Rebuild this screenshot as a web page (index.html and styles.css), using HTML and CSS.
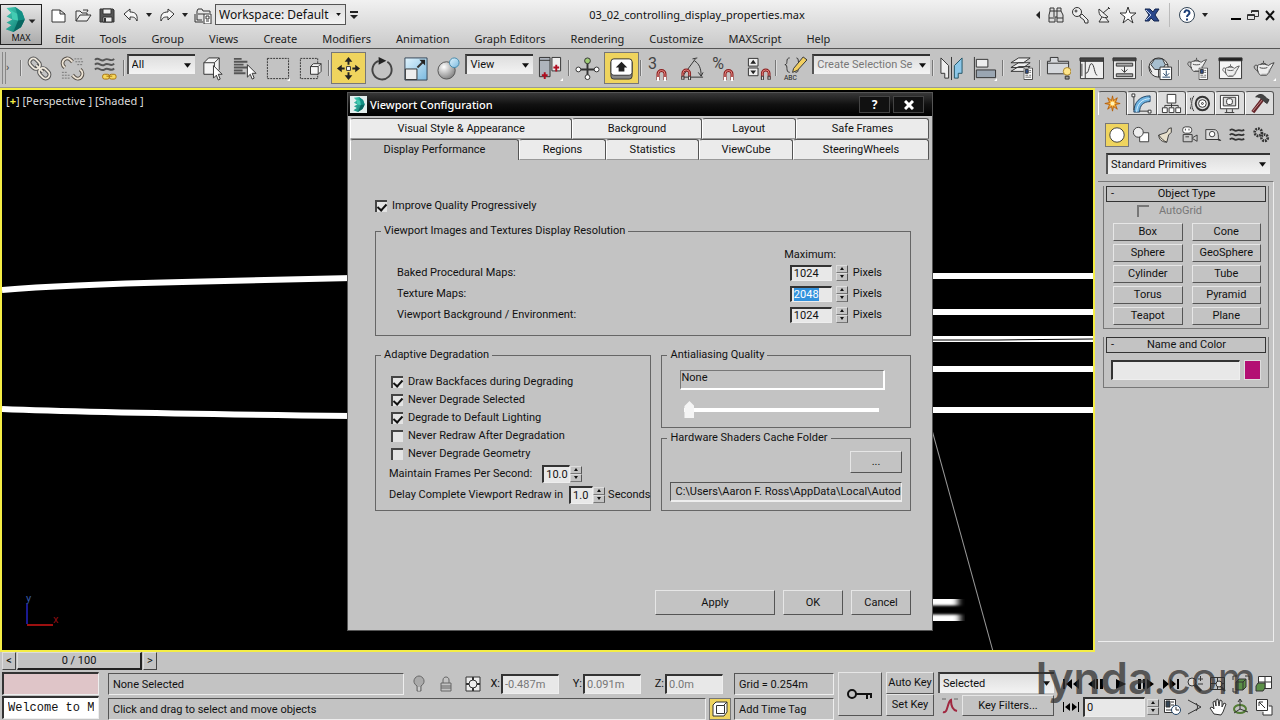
FILE: index.html
```html
<!DOCTYPE html>
<html lang="en">
<head>
  <meta charset="UTF-8">
  <meta name="viewport" content="width=device-width, initial-scale=1.0">
  <title>03_02_controlling_display_properties.max</title>
  <link rel="stylesheet" href="styles.css">
</head>
<body>

  <!-- Shared shapes -->
  <svg class="defs" aria-hidden="true">
    <defs>
      <linearGradient id="teal" x1="0" y1="0" x2="1" y2="1">
        <stop offset="0" stop-color="#45cdb5"/><stop offset="1" stop-color="#08736c"/>
      </linearGradient>
      <radialGradient id="ball" cx=".35" cy=".3" r=".8">
        <stop offset="0" stop-color="#fff"/><stop offset="1" stop-color="#777"/>
      </radialGradient>
      <linearGradient id="sky" x1="0" y1="0" x2="1" y2="1">
        <stop offset="0" stop-color="#e2f4fd"/><stop offset="1" stop-color="#7ab9e0"/>
      </linearGradient>
      <symbol id="logo" viewBox="0 0 20 26">
        <path d="M1 1 10 0 17 5 20 13 16 21 8 26 0 23 6 19 1 16 7 13 1 10 6 6Z" fill="url(#teal)"/>
        <path d="M10 0 17 5 20 13 13 14 12 7Z" fill="#128f84"/>
        <path d="M20 13 16 21 8 26 13 14Z" fill="#086660"/>
        <path d="M1 1 12 7 13 14 7 13 6 6Z" fill="#43cbb2"/>
      </symbol>
      <symbol id="magnet" viewBox="0 0 11 13">
        <path d="M2 12V6a3.500 3.500 0 0 1 7 0v6" fill="none" stroke="#8c2020" stroke-width="3"/>
        <path d="M2 12V6a3.500 3.500 0 0 1 7 0v6" fill="none" stroke="#e88a84"/>
        <path d="M1 9h2v4H1zM8 9h2v4H8z" fill="#fff"/>
      </symbol>
      <symbol id="teapot" viewBox="0 0 24 18">
        <path d="M6 7C7 5 15 5 17 7l3-2 3-1-4 7c-1 4-3 5-4 6H9C6 15 5 12 6 7Z" fill="#eee" stroke="#444"/>
        <path d="M6 7C1 5 1 11 7 13M9 6c1-2 5-2 6 0M12 2v2M8 9c2 1 6 1 8 0" fill="none" stroke="#444"/>
        <path d="M10 16h5c2-1 3-3 3-5" fill="none" stroke="#999"/>
      </symbol>
      <symbol id="card" viewBox="0 0 10 13">
        <path d="M.5.5h9v12h-9z" fill="#fff" stroke="#444"/>
        <path d="M2 2h3v4H2z" fill="#2c4d8d"/><path d="M6 3h2M6 5h2M2 8h3M6 8h2M2 10h6" stroke="#666"/>
      </symbol>
    </defs>
  </svg>

  <header class="app-header">
    <button class="app-button" type="button">
      <svg class="app-logo" viewBox="0 0 32 28"><use href="#logo" x="0" y="1" width="20" height="26"/><path d="M24 14h7l-3.500 4z" fill="#222"/></svg>
      <span>MAX</span>
    </button>
    <div class="header-rows">
      <div class="title-row">
        <div class="quick-bar">
          <button type="button" aria-label="New"><svg class="icon" viewBox="0 0 18 18"><path d="M2 4h8l5 4v8H2zM10 4v4h5" fill="#fff"/></svg></button>
          <button type="button" aria-label="Open"><svg class="icon" viewBox="0 0 18 18"><path d="M2 15V5h4l2 2h5v2M2 15 6 9h11l-4 6zM9 4h5l-1 2" fill="#eee"/></svg></button>
          <button type="button" aria-label="Save"><svg class="icon" viewBox="0 0 18 18"><path d="M2 3h13l1 1v12H2z" fill="#555"/><path d="M5 3h8v5H5zM5 11h9v5H5z" fill="#eee"/><path d="M7 12v4" stroke-width="2"/></svg></button>
          <button type="button" aria-label="Undo"><svg class="icon" viewBox="0 0 18 18"><path d="m2 8 6-5v3c5 0 8 2 7 9-2-4-3-4-7-4v3z" fill="#f6f6f6"/></svg></button>
          <span class="tiny-arrow"></span>
          <button type="button" aria-label="Redo"><svg class="icon" viewBox="0 0 18 18"><path d="m16 8-6-5v3c-5 0-8 2-7 9 2-4 3-4 7-4v3z" fill="#f6f6f6"/></svg></button>
          <span class="tiny-arrow"></span>
          <button type="button" aria-label="Project folder"><svg class="icon" viewBox="0 0 18 18"><path d="M8 14H3V5l1-2h4l1 2h7v2M1 8v8h8M4 8h6" /><path d="M10 8h7v10h-7z" fill="#fff"/><path d="M12 10h3v3h-3zM12 15h3"/></svg></button>
          <select class="workspace" aria-label="Workspace"><option>Workspace: Default</option></select>
          <svg class="quick-more" viewBox="0 0 8 8"><path d="M0 0h8v2H0zM0 4h8L4 8z" fill="#222"/></svg>
        </div>
        <h1 class="doc-title">03_02_controlling_display_properties.max</h1>
        <div class="info-bar">
          <svg class="back-arrow" viewBox="0 0 4 8"><path d="M4 0v8L0 4z" fill="#222"/></svg>
          <button type="button" aria-label="Search"><svg class="icon" viewBox="0 0 18 18"><path d="M3 2h4v3h3V2h4v3l2 4v7h-6v-5H8v5H2V9l1-4zM3 5h4v6M10 11V5h4M2 12h5M10 12h6" fill="#ddd"/></svg></button>
          <button type="button" aria-label="Subscription"><svg class="icon" viewBox="0 0 18 18"><circle cx="6" cy="6" r="4.500" fill="#eee"/><circle cx="5" cy="5" r="1"/><path d="m9 9 2-1 6 6v3h-3l-1-3-4-3z" fill="#eee"/></svg></button>
          <button type="button" aria-label="Communication"><svg class="icon" viewBox="0 0 18 18"><path d="M4 3c-1 7 4 10 9 8zM8 7l6-5M13 1l2 2M7 11l-3 5h10l-4-5" fill="#eee"/></svg></button>
          <button type="button" aria-label="Favorites"><svg class="icon" viewBox="0 0 18 18"><path d="m9 1 2 6h6l-5 4 2 6-5-4-5 4 2-6-5-4h6z" fill="#fff"/></svg></button>
          <button type="button" aria-label="Exchange"><svg class="icon" viewBox="0 0 18 18"><path d="M2 3h5l3 3 2-3h4l-4 6 4 6h-5l-3-3-2 3H2l4-6z" fill="#29478c" stroke="#14264f"/><path d="m3 4 5 5-5 5" stroke="#b8c8e8"/></svg></button>
          <span class="info-sep"></span>
          <button type="button" aria-label="Help"><svg class="icon" viewBox="0 0 18 18"><circle cx="9" cy="9" r="7.500" fill="#fff" stroke="#345"/><path d="M6.500 7c0-4 5-3 5 0 0 2-2.500 1-2.500 4M9 12.500v2" stroke="#1d3f78" stroke-width="2"/></svg></button>
          <span class="tiny-arrow"></span>
        </div>
        <div class="window-buttons">
          <button type="button" aria-label="Minimize"><svg viewBox="0 0 12 12"><path d="M1 9h10v2H1z"/></svg></button>
          <button type="button" aria-label="Restore"><svg class="icon" viewBox="0 0 12 12"><path d="M4.500 4V1.500h7v6H8M.5 5.500h7v5h-7zM.5 6.500h7M4.500 2.500h7"/></svg></button>
          <button type="button" aria-label="Close"><svg viewBox="0 0 12 12"><path d="m2 2 8 9M10 2l-8 9" stroke="#111" stroke-width="2"/></svg></button>
        </div>
      </div>
      <nav class="menu-bar">
        <a href="#">Edit</a>
        <a href="#">Tools</a>
        <a href="#">Group</a>
        <a href="#">Views</a>
        <a href="#">Create</a>
        <a href="#">Modifiers</a>
        <a href="#">Animation</a>
        <a href="#">Graph Editors</a>
        <a href="#">Rendering</a>
        <a href="#">Customize</a>
        <a href="#">MAXScript</a>
        <a href="#">Help</a>
      </nav>
    </div>
  </header>

  <div class="toolbar">
    <span class="grip"></span><span class="chevron">›</span>
    <span class="sep"></span>
    <button type="button" aria-label="Link"><svg class="icon" viewBox="0 0 26 26"><g transform="rotate(45 13 13)"><rect x="0" y="9" width="12" height="8" rx="4" stroke="#555" stroke-width="4"/><rect x="14" y="9" width="12" height="8" rx="4" stroke="#555" stroke-width="4"/><path d="M8 13h10" stroke="#555" stroke-width="4"/><rect x="0" y="9" width="12" height="8" rx="4" stroke="#eee8dc" stroke-width="2"/><rect x="14" y="9" width="12" height="8" rx="4" stroke="#eee8dc" stroke-width="2"/><path d="M8 13h10" stroke="#eee8dc" stroke-width="2"/></g></svg></button>
    <button type="button" aria-label="Unlink"><svg class="icon" viewBox="0 0 26 26"><g stroke="#554f48" stroke-width="4"><path d="M5 12C-1 7 6-1 11 4l2 2M21 14c6 5-1 13-6 8l-2-2"/></g><g stroke="#eee4d4" stroke-width="2"><path d="M5 12C-1 7 6-1 11 4l2 2M21 14c6 5-1 13-6 8l-2-2"/></g><path d="M15 3h9M16 6h8M18 9h6M2 17h6M2 20h8M2 23h9" stroke="#777" stroke-dasharray="2 1"/></svg></button>
    <button type="button" aria-label="Bind to space warp"><svg class="icon" viewBox="0 0 26 26"><path d="M2 4c4-4 6 3 10 0s6 3 10-1M2 9c4-4 6 3 10 0s6 3 10-1M2 14c4-4 6 3 10 0s6 3 10-1" stroke="#555" stroke-width="2"/><rect x="10" y="19" width="7" height="5" rx="2" fill="#f6d85c" stroke="#a87410"/><rect x="17" y="19" width="7" height="5" rx="2" fill="#f6d85c" stroke="#a87410"/><path d="M14 21h6" stroke="#a87410"/></svg></button>
    <span class="sep"></span>
    <select class="filter" aria-label="Selection filter"><option>All</option></select>
    <button type="button" aria-label="Select object"><svg class="icon" viewBox="0 0 26 26"><path d="m4 7 5-5h11v12l-5 5H4zM4 7h11v12M15 7l5-5" fill="#f4f4f4"/><path d="M14 10v13l3-3 2 5 2-1-2-5h4z" fill="#fff"/></svg></button>
    <button type="button" aria-label="Select by name"><svg class="icon" viewBox="0 0 26 26"><path d="M2 3h8M2 6h14M2 9h10M2 12h14M2 15h9M2 18h12" stroke="#555" stroke-width="2"/><path d="M16 9v13l3-3 2 5 2-1-2-5h4z" fill="#fff"/></svg></button>
    <button type="button" aria-label="Selection region"><svg class="icon" viewBox="0 0 26 26"><path d="M2.500 2.500h22v21h-22z" stroke-dasharray="2 1"/><path d="m23 26 3-3v3z" fill="#fff" stroke="none"/></svg></button>
    <button type="button" aria-label="Window crossing"><svg class="icon" viewBox="0 0 26 26"><path d="M2.500 2.500h18v21h-18z" stroke-dasharray="2 1"/><path d="m13 11 3-3h8v8l-3 3h-8zM13 11h8v8M21 11l3-3" fill="#f4f4f4"/></svg></button>
    <span class="sep"></span>
    <button class="on" type="button" aria-label="Move"><svg class="icon" viewBox="0 0 26 26"><path d="M11 11h4v4h-4z" fill="#fff"/><path d="M13 1 9 6h3v3h2V6h3zM13 25l-4-5h3v-3h2v3h3zM1 13l5-4v3h3v2H6v3zM25 13l-5-4v3h-3v2h3v3z" fill="#222" stroke="none"/></svg></button>
    <button type="button" aria-label="Rotate"><svg class="icon" viewBox="0 0 26 26"><path d="M9 5a10 10 0 1 0 9 1" stroke="#444" stroke-width="2"/><path d="m9 1 8 4-8 4z" fill="#222" stroke="none"/></svg></button>
    <button type="button" aria-label="Scale"><svg class="icon" viewBox="0 0 26 26"><path d="M2 2h23v23H2z" fill="url(#sky)" stroke="#345"/><path d="M2.500 13.500h12v11h-12z" fill="#eee"/><path d="m15 12 6-6" stroke-width="2"/><path d="M17 4h6v6z" fill="#222" stroke="none"/></svg></button>
    <button type="button" aria-label="Place"><svg class="icon" viewBox="0 0 26 26"><circle cx="11" cy="15" r="9" fill="url(#ball)" stroke="#555"/><circle cx="19" cy="7" r="5" fill="url(#sky)" stroke="#48a"/></svg></button>
    <select class="filter" aria-label="Reference coordinate system"><option>View</option></select>
    <button type="button" aria-label="Pivot center"><svg class="icon" viewBox="0 0 26 26"><path d="M1.500 1.500h11v20h-11zM1.500 4.500h11" fill="#aeb4bd"/><path d="M14.500 1.500h9v14h-9z" fill="#eee"/><path d="M7 17v7M4 20h6M19 9v7M16 12h6" stroke="#b00d20" stroke-width="2"/><path d="m23 26 3-3v3z" fill="#fff" stroke="none"/></svg></button>
    <span class="sep"></span>
    <button type="button" aria-label="Manipulate"><svg class="icon" viewBox="0 0 26 26"><path d="M13 5v17M3 14h20" stroke-width="2"/><circle cx="13" cy="5" r="3" fill="#9fcd74"/><circle cx="13" cy="22" r="2.500" fill="#fff"/><circle cx="3.500" cy="14" r="2.500" fill="#fff"/><circle cx="22.500" cy="14" r="2.500" fill="#fff"/></svg></button>
    <button class="on" type="button" aria-label="Keyboard override"><svg class="icon" viewBox="0 0 26 26"><rect x="2" y="4" width="22" height="20" rx="3" fill="#888"/><rect x="2" y="3" width="22" height="17" rx="3" fill="#fff"/><path d="m13 6 6 6h-3v4h-6v-4H7z" fill="#222" stroke="none"/></svg></button>
    <span class="sep"></span>
    <button type="button" aria-label="Snaps toggle"><span class="glyph">3</span><svg class="snap"><use href="#magnet"/></svg></button>
    <button type="button" aria-label="Angle snap"><svg class="icon" viewBox="0 0 26 26"><path d="M2 22 16 3M2 22h22M15 5c5 3 7 8 7 16M13 3l5-1M19 17l3 4 2-4"/><use href="#magnet" x="1" y="12" width="11" height="13"/></svg></button>
    <button type="button" aria-label="Percent snap"><span class="glyph">%</span><svg class="snap"><use href="#magnet"/></svg></button>
    <button type="button" aria-label="Spinner snap"><svg class="icon" viewBox="0 0 26 26"><path d="M2.500 2.500h10v8h-10zM2.500 12.500h10v8h-10z" fill="#eee"/><path d="m7.500 4 3 4h-6zM7.500 19l3-4h-6z" fill="#222" stroke="none"/><use href="#magnet" x="15" y="12" width="11" height="13"/></svg></button>
    <span class="sep"></span>
    <button type="button" aria-label="Edit named selection sets"><svg class="icon" viewBox="0 0 26 26"><path d="M8 2C3 2 7 9 3 9c4 0 0 8 5 8M15 2c3 0 1 4 3 6M14 17c4 0 2-3 3-5"/><path d="m12 13 10-12 4 3-10 11-5 2z" fill="#f2cf60"/><text x="2" y="25" class="abc">ABC</text></svg></button>
    <select class="filter sets" aria-label="Named selection sets"><option>Create Selection Se</option></select>
    <span class="sep"></span>
    <button type="button" aria-label="Mirror"><svg class="icon" viewBox="0 0 26 26"><path d="m2 2 8 8v13H6v-5H2z" fill="#eee"/><path d="m24 2-8 8v13h4v-5h4z" fill="#8cc7e8" stroke="#256"/><path d="M13 1v24"/></svg></button>
    <button type="button" aria-label="Align"><svg class="icon" viewBox="0 0 26 26"><path d="M2.500 1v24"/><path d="M4.500 3.500h12v8h-12z" fill="#eee"/><path d="M4.500 14.500h20v8h-20z" fill="#9aa6b2"/><path d="m23 26 3-3v3z" fill="#fff" stroke="none"/></svg></button>
    <span class="sep"></span>
    <button type="button" aria-label="Layers"><svg class="icon" viewBox="0 0 26 26"><path d="m2 16 8-5h12l-7 5zM2 12l8-5h12l-7 5zM2 7l8-5h12l-7 5z" fill="#eee"/><use href="#card" x="15" y="12" width="10" height="13"/></svg></button>
    <span class="sep"></span>
    <button type="button" aria-label="Ribbon"><svg class="icon" viewBox="0 0 26 26"><path d="M1.500 18.500v-13h3v-4h8v4h11v13zM1.500 7.500h22" fill="#d5d8dc"/><circle cx="22" cy="16" r="4" fill="#ffe68a" stroke="#a8842e"/><path d="M20 21h4v3h-4z" fill="#999"/></svg></button>
    <button type="button" aria-label="Curve editor"><svg class="icon" viewBox="0 0 26 26"><path d="M1.500 2.500h24v21h-24zM1.500 5.500h24M6.500 5v18" fill="#eee"/><path d="M1 2h25v3H1z" fill="#444"/><path d="M7 18c4 0 3-10 6-10s3 12 6 12M3 8v13" stroke-width="1"/></svg></button>
    <button type="button" aria-label="Schematic view"><svg class="icon" viewBox="0 0 26 26"><path d="M1.500 2.500h23v21h-23z" fill="#eee"/><path d="M1 2h24v3H1z" fill="#444"/><path d="M4.500 7.500h17v3h-17zM4.500 18.500h17v3h-17z" fill="#aaa"/><path d="M13 11v6M10 14l3 3 3-3"/></svg></button>
    <span class="sep"></span>
    <button type="button" aria-label="Material editor"><svg class="icon" viewBox="0 0 26 26"><circle cx="11" cy="12" r="10" fill="#eee"/><path d="M7 3h8l3 6-3 5H7l-4-5zM1 11l3 6M11 14v8M18 9h3" fill="#a7bfd0"/><path d="M12.500 11.500h12v13h-12z" fill="#fff"/><path d="M15 14h8M15 22h8M19 15v5M16 18l3 3 3-3" stroke="#246"/></svg></button>
    <span class="sep"></span>
    <button type="button" aria-label="Render setup"><svg class="icon" viewBox="0 0 26 26"><use href="#teapot" x="0" y="0" width="24" height="17"/><use href="#card" x="14" y="12" width="10" height="13"/></svg></button>
    <button type="button" aria-label="Rendered frame window"><svg class="icon" viewBox="0 0 26 26"><path d="M1.500 2.500h23v21h-23z" fill="#f5f5f5"/><path d="M1 2h24v3H1z" fill="#222"/><use href="#teapot" x="3" y="7" width="20" height="15"/></svg></button>
    <button type="button" aria-label="Render"><svg class="icon" viewBox="0 0 26 26"><use href="#teapot" x="1" y="3" width="24" height="18"/><path d="m23 26 3-3v3z" fill="#fff" stroke="none"/></svg></button>
  </div>

  <main class="workspace-area">
    <section class="viewport">
      <!-- Wireframe lines of the scene -->
      <svg class="scene" viewBox="0 0 1090 560" preserveAspectRatio="none">
        <defs><filter id="soft"><feGaussianBlur stdDeviation="3 1"/></filter></defs>
        <g fill="none" stroke="#fff" stroke-width="6">
          <path d="M0 200Q60 195 180 192T350 188M0 319Q100 323 350 326"/>
          <path d="M925 186h165M925 222h165M925 249h165M925 279h165M925 320h165"/>
        </g>
        <path d="M925 250h70l95-1" stroke="#000" fill="none"/>
        <path d="m925 325 65 236" stroke="#999" fill="none"/>
        <path d="M915 511h40M915 529h42" stroke="#fff" stroke-width="9" filter="url(#soft)"/>
      </svg>
      <div class="view-label">[<b>+</b>] [Perspective ] [Shaded ]</div>
      <svg class="axis" viewBox="0 0 40 40"><path d="M3 14v20" stroke="#1a1a90" stroke-width="2"/><path d="M3 35h26" stroke="#9c1010" stroke-width="2"/><text x="2" y="12" fill="#3759a8">y</text><text x="29" y="33" fill="#8c0d12">x</text></svg>

      <form class="dialog">
        <div class="dialog-title">
          <svg class="dialog-logo" viewBox="0 0 16 16"><path d="M0 0h16v16H0z" fill="#e4efee"/><use href="#logo" x="3" y="1" width="11" height="14"/></svg>
          <h2>Viewport Configuration</h2>
          <button type="button" aria-label="Help"><b>?</b></button>
          <button type="button" aria-label="Close"><svg viewBox="0 0 10 10"><path d="m1 1 8 8M9 1 1 9" stroke="#fff" stroke-width="3"/></svg></button>
        </div>
        <div class="tabs tabs-back">
          <button type="button">Visual Style &amp; Appearance</button>
          <button type="button">Background</button>
          <button type="button">Layout</button>
          <button type="button">Safe Frames</button>
        </div>
        <div class="tabs tabs-front">
          <button class="active" type="button">Display Performance</button>
          <button type="button">Regions</button>
          <button type="button">Statistics</button>
          <button type="button">ViewCube</button>
          <button type="button">SteeringWheels</button>
        </div>

        <div class="dialog-body">
          <label class="check"><input type="checkbox" checked> Improve Quality Progressively</label>

          <fieldset class="resolution">
            <legend>Viewport Images and Textures Display Resolution</legend>
            <div class="res-head">Maximum:</div>
            <div class="res-row">
              <label for="baked">Baked Procedural Maps:</label>
              <input id="baked" type="text" value="1024">
              <span class="spin"><button type="button" aria-label="Up"></button><button type="button" aria-label="Down"></button></span>
              <span>Pixels</span>
            </div>
            <div class="res-row">
              <label for="texture">Texture Maps:</label>
              <input id="texture" type="text" value="2048">
              <span class="spin"><button type="button" aria-label="Up"></button><button type="button" aria-label="Down"></button></span>
              <span>Pixels</span>
            </div>
            <div class="res-row">
              <label for="backdrop">Viewport Background / Environment:</label>
              <input id="backdrop" type="text" value="1024">
              <span class="spin"><button type="button" aria-label="Up"></button><button type="button" aria-label="Down"></button></span>
              <span>Pixels</span>
            </div>
          </fieldset>

          <div class="columns">
            <fieldset class="degradation">
              <legend>Adaptive Degradation</legend>
              <label class="check"><input type="checkbox" checked> Draw Backfaces during Degrading</label>
              <label class="check"><input type="checkbox" checked> Never Degrade Selected</label>
              <label class="check"><input type="checkbox" checked> Degrade to Default Lighting</label>
              <label class="check"><input type="checkbox"> Never Redraw After Degradation</label>
              <label class="check"><input type="checkbox"> Never Degrade Geometry</label>
              <div class="num-row">
                <label for="fps">Maintain Frames Per Second:</label>
                <input id="fps" class="fps" type="text" value="10.0">
                <span class="spin"><button type="button" aria-label="Up"></button><button type="button" aria-label="Down"></button></span>
              </div>
              <div class="num-row">
                <label for="delay">Delay Complete Viewport Redraw in</label>
                <input id="delay" type="text" value="1.0">
                <span class="spin"><button type="button" aria-label="Up"></button><button type="button" aria-label="Down"></button></span>
                <span>Seconds</span>
              </div>
            </fieldset>

            <div class="side">
              <fieldset class="quality">
                <legend>Antialiasing Quality</legend>
                <output class="quality-value">None</output>
                <input class="slider" type="range" min="0" max="8" value="0" aria-label="Antialiasing quality">
              </fieldset>
              <fieldset class="cache">
                <legend>Hardware Shaders Cache Folder</legend>
                <button class="btn" type="button">...</button>
                <input type="text" aria-label="Cache folder" readonly value="C:\Users\Aaron F. Ross\AppData\Local\Autodesk">
              </fieldset>
            </div>
          </div>

          <div class="actions">
            <button class="btn apply" type="button">Apply</button>
            <button class="btn" type="button">OK</button>
            <button class="btn" type="button">Cancel</button>
          </div>
        </div>
      </form>
    </section>

    <aside class="command-panel">
      <div class="panel-tabs">
        <button class="active" type="button" aria-label="Create"><svg class="icon" viewBox="0 0 22 22"><path d="m11 3 1 5 4-3-2 5 5 1-5 1 2 5-4-3-1 5-1-5-4 3 2-5-5-1 5-1-2-5 4 3z" fill="#fbb33c" stroke="#b5600c"/><circle cx="11" cy="11" r="2" fill="#fff3b8" stroke="none"/></svg></button>
        <button type="button" aria-label="Modify"><svg class="icon" viewBox="0 0 22 22"><path d="M3 20C3 10 9 3 20 3v6c-7 0-11 4-11 11z" fill="#6fb3e0" stroke="#246"/><path d="M6 20C6 12 11 6 20 6" stroke="#d5efff"/><path d="M1 1h3v3H1zM18 18h3v3h-3zM3 4v14M9 19h9" fill="#fff"/></svg></button>
        <button type="button" aria-label="Hierarchy"><svg class="icon" viewBox="0 0 22 22"><path d="M6.500 1.500h9v9h-9zM1.500 15.500h5v5h-5zM8.500 15.500h5v5h-5zM15.500 15.500h5v5h-5z" fill="#fff"/><path d="M11 11v4M4 15v-2h14v2"/></svg></button>
        <button type="button" aria-label="Motion"><svg class="icon" viewBox="0 0 22 22"><circle cx="13" cy="11" r="7" fill="#ddd" stroke-width="2"/><circle cx="13" cy="11" r="4" fill="#fff"/><circle cx="13" cy="11" r="1"/><path d="M4 3c-3 5-3 11 0 16M1 5c-2 4-2 8 0 12"/></svg></button>
        <button type="button" aria-label="Display"><svg class="icon" viewBox="0 0 22 22"><path d="M1.500 2.500h19v14h-19zM6 20.500h10M8 17v3M14 17v3" fill="#fff"/><path d="M4.500 4.500h13v9h-13z" fill="#ddd"/><rect x="8" y="6" width="6" height="6" rx="2" fill="#fff"/></svg></button>
        <button type="button" aria-label="Utilities"><svg class="icon" viewBox="0 0 22 22"><path d="m4 20 10-13" stroke="#66252a" stroke-width="4"/><path d="m4 19 10-12" stroke="#c89090"/><path d="M7 4c4-4 8-2 9-1l3 3 2 1-2 4-3-2-2-2c-2-2-4-3-7-3z" fill="#444"/></svg></button>
      </div>
      <div class="categories">
        <button class="on" type="button" aria-label="Geometry"><svg class="icon" viewBox="0 0 20 20"><circle cx="10" cy="10" r="8" fill="#fff"/></svg></button>
        <button type="button" aria-label="Shapes"><svg class="icon" viewBox="0 0 20 20"><path d="M8.500 7.500h10v10h-10z" fill="#fff"/><circle cx="7" cy="7" r="5.500" fill="#eee"/></svg></button>
        <button type="button" aria-label="Lights"><svg class="icon" viewBox="0 0 20 20"><path d="m17 2-3 1-2 4-9 3c0 5 4 8 9 8l2-8 3-3z" fill="#e8e0cc"/><path d="M3 10c3 4 6 7 9 8"/></svg></button>
        <button type="button" aria-label="Cameras"><svg class="icon" viewBox="0 0 20 20"><rect x="3" y="1" width="10" height="7" rx="3" fill="#fff"/><path d="M3.500 9.500h10v8h-10zM14 13l5-3v7l-5-3" fill="#ccc"/><path d="M6 3v2M10 3v2M6 12h4"/></svg></button>
        <button type="button" aria-label="Helpers"><svg class="icon" viewBox="0 0 20 20"><path d="M2 15V4h9c5 0 5 6 5 11zM16 16h3M5 15h13" fill="#ddd"/><circle cx="9" cy="9" r="3" fill="#fff"/></svg></button>
        <button type="button" aria-label="Space warps"><svg class="icon" viewBox="0 0 20 20"><path d="M2 5c3-4 5 2 8 0s5 2 8-1M2 10c3-4 5 2 8 0s5 2 8-1M2 15c3-4 5 2 8 0s5 2 8-1" stroke-width="2"/></svg></button>
        <button type="button" aria-label="Systems"><svg class="icon" viewBox="0 0 20 20"><circle cx="7" cy="7" r="4" stroke-width="3" stroke-dasharray="2 1"/><circle cx="14" cy="13" r="3.500" stroke-width="3" stroke-dasharray="2 1"/></svg></button>
      </div>
      <select class="primitives" aria-label="Object category"><option>Standard Primitives</option></select>

      <div class="rollouts">
        <section class="rollout">
          <h3><button type="button"><span>-</span>Object Type</button></h3>
          <label class="check disabled"><input type="checkbox" disabled> AutoGrid</label>
          <div class="object-grid">
            <button class="btn" type="button">Box</button>
            <button class="btn" type="button">Cone</button>
            <button class="btn" type="button">Sphere</button>
            <button class="btn" type="button">GeoSphere</button>
            <button class="btn" type="button">Cylinder</button>
            <button class="btn" type="button">Tube</button>
            <button class="btn" type="button">Torus</button>
            <button class="btn" type="button">Pyramid</button>
            <button class="btn" type="button">Teapot</button>
            <button class="btn" type="button">Plane</button>
          </div>
        </section>
        <section class="rollout">
          <h3><button type="button"><span>-</span>Name and Color</button></h3>
          <div class="name-row">
            <input type="text" aria-label="Object name">
            <button class="swatch" type="button" aria-label="Object color"></button>
          </div>
        </section>
      </div>
    </aside>
  </main>

  <footer class="footer">
    <div class="time-slider">
      <button type="button">&lt;</button>
      <button class="frame" type="button">0 / 100</button>
      <button type="button">&gt;</button>
    </div>

    <div class="status">
      <div class="listener">
        <input class="macro" type="text" aria-label="Macro recorder">
        <input type="text" aria-label="Script listener" value="Welcome to MAXScript.">
      </div>

      <div class="status-rows">
        <div class="status-row">
          <div class="well grow">None Selected</div>
          <svg class="icon mini" viewBox="0 0 18 18"><path d="M7 11C1 7 5 1 9 1s8 6 2 10v5H7z" fill="#aaa" stroke="#666"/><path d="M9 12v4" stroke="#eee"/></svg>
          <svg class="icon mini" viewBox="0 0 18 18"><path d="M4 8h10v8H4zM6 8V5c0-4 6-4 6 0v3M4 11h10M4 13h10" stroke="#666"/></svg>
          <svg class="icon mini" viewBox="0 0 18 18"><path d="M2 2h14v14H2z" fill="#eee"/><circle cx="9" cy="9" r="4"/><path d="M9 2v3M9 13v3M2 9h3M13 9h3" stroke-width="2"/></svg>
          <label class="coord">X:<input type="text" value="-0.487m"></label>
          <label class="coord">Y:<input type="text" value="0.091m"></label>
          <label class="coord">Z:<input type="text" value="0.0m"></label>
          <div class="well side-well">Grid = 0.254m</div>
        </div>
        <div class="status-row">
          <div class="well grow">Click and drag to select and move objects</div>
          <button class="on cube" type="button" aria-label="Adaptive degradation"><svg class="icon" viewBox="0 0 18 18"><path d="m2 5 3-3h11v10l-3 4H2z" fill="#fff"/><path d="M5.500 5.500h8v8h-8zM13 5l3-3"/></svg></button>
          <div class="well side-well">Add Time Tag</div>
        </div>
      </div>

      <button class="btn set-keys" type="button" aria-label="Set keys"><svg class="icon" viewBox="0 0 26 14"><circle cx="5" cy="7" r="4" stroke="#111" stroke-width="2"/><path d="M9 7h16M20 7v5M24 7v4" stroke="#111" stroke-width="2"/></svg></button>
      <div class="key-modes">
        <button class="btn" type="button">Auto Key</button>
        <button class="btn" type="button">Set Key</button>
      </div>
      <div class="key-options">
        <select aria-label="Key selection set"><option>Selected</option></select>
        <div class="key-filter-row">
          <svg class="icon mini" viewBox="0 0 18 18"><path d="M2 15c5 2 4-10 8-12 0 6 1 10 6 11" stroke="#a02840" stroke-width="2"/><path d="M1 2h4M13 2h4" stroke="#666"/></svg>
          <button class="btn" type="button">Key Filters...</button>
        </div>
      </div>
      <!-- Playback buttons and view navigation share two rows -->
      <div class="controls">
        <div class="control-row">
          <button class="play" type="button" aria-label="Go to start"><svg viewBox="0 0 18 12"><path d="M1 1h2v10H1zM10 1v10L4 6zM17 1v10l-6-5z"/></svg></button>
          <button class="play" type="button" aria-label="Previous frame"><svg viewBox="0 0 18 12"><path d="M8 1v10L1 6zM9 1h2v10H9zM13 1h3v10h-3z"/></svg></button>
          <button class="play" type="button" aria-label="Play"><svg viewBox="0 0 18 12"><path d="M4 1v10l10-5z"/></svg></button>
          <button class="play" type="button" aria-label="Next frame"><svg viewBox="0 0 18 12"><path d="M1 1h3v10H1zM6 1h2v10H6zM10 1v10l7-5z"/></svg></button>
          <button class="play" type="button" aria-label="Go to end"><svg viewBox="0 0 18 12"><path d="M1 1v10l6-5zM8 1v10l6-5zM15 1h2v10h-2z"/></svg></button>
          <button class="nav" type="button" aria-label="Zoom"><svg class="icon" viewBox="0 0 18 18"><circle cx="6" cy="7" r="4" fill="#ddd"/><path d="m9 10 6 6" stroke-width="3"/><path d="M12 4h5M14.500 1v5M12 9h5"/></svg></button>
          <button class="nav" type="button" aria-label="Zoom all"><svg class="icon" viewBox="0 0 18 18"><path d="M1.500 2.500h14v12h-14zM8.500 2v12M2 8.500h13"/><circle cx="10" cy="9" r="3" fill="#ddd"/><path d="m12 12 4 4" stroke-width="2"/></svg></button>
          <button class="nav" type="button" aria-label="Zoom extents"><svg class="icon" viewBox="0 0 18 18"><path d="m4 7 3-3h7v8l-3 3H4z" fill="#5c9048"/><path d="M4 7h7v8M11 7l3-3M1 5V1h4M13 1h4v4M1 13v4h4"/></svg></button>
          <button class="nav" type="button" aria-label="Zoom extents all"><svg class="icon" viewBox="0 0 18 18"><path d="M3.500 1.500h13v12h-13zM10 2v11M4 7h12" fill="#fff"/><path d="m1 11 2-3h7v5l-2 3H1z" fill="#5c9048"/></svg></button>
        </div>
        <div class="control-row">
          <button class="play" type="button" aria-label="Key mode"><svg viewBox="0 0 18 12"><path d="M1 1h1v10H1zM8 2v8L3 6zM10 2v8l5-4zM16 1h1v10h-1z"/></svg></button>
          <input type="text" value="0" aria-label="Current frame">
          <span class="spin"><button type="button" aria-label="Up"></button><button type="button" aria-label="Down"></button></span>
          <button class="nav" type="button" aria-label="Time configuration"><svg class="icon" viewBox="0 0 18 18"><path d="M1.500 1.500h11v13h-11z" fill="#fff"/><path d="M3 3h4v6H3z" fill="#345"/><path d="M8 4h3M8 7h3M3 12h6"/><circle cx="13" cy="12" r="4.500" fill="#fff" stroke="#246"/><path d="M13 9v3h3"/></svg></button>
          <button class="nav" type="button" aria-label="Field of view"><svg class="icon" viewBox="0 0 18 18"><path d="m2 2 13 7L2 16M10 5c2 3 2 5 0 8"/></svg></button>
          <button class="nav" type="button" aria-label="Pan"><svg class="icon" viewBox="0 0 18 18"><path d="M5 16 1 10l2-1 2 2-1-7 2-1 1 5V2l2-1 1 7 1-6 2 1v6l2-4 2 1-3 8-2 3z" fill="#fff"/></svg></button>
          <button class="nav" type="button" aria-label="Orbit"><svg class="icon" viewBox="0 0 18 18"><ellipse cx="8" cy="11" rx="6" ry="4" stroke="#537c35" stroke-width="2"/><path d="M8 1v10l8 3M8 11l-6 4M6 4l2-3 2 3"/></svg></button>
          <button class="nav" type="button" aria-label="Maximize viewport"><svg class="icon" viewBox="0 0 18 18"><path d="M1.500 1.500h11v11h-11zM14 8h3v9H8v-3" fill="#fff"/><path d="m4 4 6 6M4 8V4h4"/></svg></button>
        </div>
      </div>
    </div>
  </footer>

  <div class="watermark"><span>lynda</span>.com</div>

  <script>
    // The texture size is the field being edited when the dialog opens
    const texture = document.getElementById('texture');
    texture.focus();
    texture.select();
  </script>
</body>
</html>
```
FILE: styles.css
```css
* {
  box-sizing: border-box;
}

body {
  display: flex;
  flex-direction: column;
  height: 100vh;
  margin: 0;
  overflow: hidden;
  position: relative;
  background-color: #c3c3c3;
  color: #111;
  font-family: Roboto, "Liberation Sans", sans-serif;
  font-size: 11px;
  line-height: 14px;
}

button,
input,
select {
  margin: 0;
  padding: 0;
  border: 0;
  border-radius: 0;
  background: none;
  color: inherit;
  font: inherit;
}

button {
  display: flex;
  align-items: center;
  justify-content: center;
}

input,
select,
button {
  outline: none;
  min-width: 0;
}

select {
  appearance: none;
  padding: 0 16px 0 3px;
  background: url("data:image/svg+xml,%3Csvg xmlns='http://www.w3.org/2000/svg' viewBox='0 0 8 5'%3E%3Cpath d='M0 0h8L4 5z' fill='%23111'/%3E%3C/svg%3E") no-repeat right 4px center / 7px 5px, linear-gradient(#dedede, #f3f3f3);
  border-top: 2px solid #333;
  border-left: 2px solid #555;
}

input[type="text"] {
  background-color: #e8e8e8;
  border: 1px solid #eee;
  border-top: 2px solid #333;
  border-left: 2px solid #333;
  padding: 0 2px;
}

.defs {
  position: absolute;
  width: 0;
  height: 0;
}

.icon {
  width: 18px;
  height: 18px;
  fill: none;
  stroke: #333;
}

.btn {
  border: 1px solid #e6e6e6;
  border-right-color: #555;
  border-bottom-color: #555;
  background-color: #c3c3c3;
}

.on {
  background-color: #efd45e;
  border: 1px solid #777;
}

/* Title and menus */
.app-header {
  display: flex;
  background: linear-gradient(#f1f1f1, #c9c9c9);
  border-bottom: 1px solid #555;
  font-family: "Noto Sans", sans-serif;
}

.app-button {
  flex-direction: column;
  width: 42px;
  height: 41px;
  margin: 4px 1px 3px 0;
  border: 1px solid #222;
  background: linear-gradient(#e5e5e5, #aaa);
  font-size: 9px;
  line-height: 10px;
}

.app-logo {
  width: 32px;
  height: 27px;
}

.header-rows {
  flex: 1;
}

.title-row {
  display: flex;
  align-items: center;
  height: 29px;
}

.quick-bar {
  display: flex;
  align-items: center;
  padding-left: 4px;
}

.quick-bar button,
.info-bar button {
  width: 24px;
  height: 24px;
}

.quick-bar .tiny-arrow {
  margin: 0 3px;
}

.tiny-arrow {
  border: 3px solid transparent;
  border-top: 4px solid #222;
  border-bottom: 0;
}

.workspace {
  width: 131px;
  height: 21px;
  border: 1px solid #555;
  background-size: 5px 3px, auto;
  font-size: 12px;
}

.quick-more {
  width: 8px;
  height: 8px;
  margin-left: 4px;
}

.doc-title {
  flex: 1;
  margin: 0;
  font-size: 11px;
  font-weight: normal;
  text-align: center;
}

.info-bar {
  display: flex;
  align-items: center;
  margin-right: 22px;
}

.back-arrow {
  width: 4px;
  height: 8px;
  margin-right: 4px;
}

.info-sep {
  width: 1px;
  height: 24px;
  margin: 0 5px;
  background-color: #bbb;
}

.info-bar .tiny-arrow {
  margin-left: 3px;
}

.window-buttons {
  display: flex;
  gap: 5px;
  padding-right: 4px;
}

.window-buttons svg {
  width: 12px;
  height: 12px;
}

.menu-bar {
  display: flex;
  gap: 25px;
  height: 19px;
  padding: 2px 12px;
}

.menu-bar a {
  color: #222;
  line-height: 16px;
  text-decoration: none;
}

/* Main toolbar */
.toolbar {
  display: flex;
  align-items: center;
  height: 39px;
  border-bottom: 1px solid #999;
}

.grip {
  width: 4px;
  height: 32px;
  margin-left: 2px;
  border: 1px solid #888;
  border-width: 0 1px;
}

.chevron {
  width: 13px;
  color: #444;
}

.sep {
  width: 2px;
  height: 16px;
  margin: 0 1px;
  border-left: 1px solid #777;
  border-right: 1px solid #ddd;
}

.toolbar button {
  flex: 1;
  height: 32px;
}

.toolbar .icon {
  width: 25px;
  height: 25px;
}

.filter {
  width: 68px;
  height: 20px;
  margin: 0 1px 8px;
}

.sets {
  width: 118px;
  color: #777;
}

.glyph {
  font-size: 16px;
  color: #444;
  margin: -9px 0 0 -4px;
}

.snap {
  width: 11px;
  height: 13px;
  margin: 12px 0 0 -1px;
}

.abc {
  font-size: 7px;
  fill: #222;
  stroke: none;
}

/* Viewport */
.workspace-area {
  display: flex;
  flex: 1;
  min-height: 0;
}

.viewport {
  flex: 1;
  position: relative;
  border: 2px solid #f5ee45;
  background-color: #000;
}

.scene {
  display: block;
  width: 100%;
  height: 100%;
}

.view-label {
  position: absolute;
  top: 4px;
  left: 4px;
  color: #ddd;
  font-family: "Noto Sans", sans-serif;
}

.view-label b {
  color: #f5ee45;
}

.axis {
  position: absolute;
  left: 22px;
  bottom: 20px;
  width: 40px;
  height: 40px;
}

/* Viewport Configuration window */
.dialog {
  position: absolute;
  top: 2px;
  left: 345px;
  width: 586px;
  border: 1px solid #555;
  background-color: #c3c3c3;
}

.dialog-title {
  display: flex;
  align-items: center;
  gap: 3px;
  height: 23px;
  padding: 0 8px 0 2px;
  background: linear-gradient(#383838, #111 50%, #000);
  color: #fff;
  font-family: "Noto Sans", sans-serif;
}

.dialog-title h2 {
  flex: 1;
  margin: 0;
  font-size: 11px;
  font-weight: 500;
}

.dialog-title button {
  width: 31px;
  height: 17px;
  border: 1px solid #444;
  background-color: #111;
  font-size: 12px;
}

.dialog-title button svg {
  width: 10px;
  height: 10px;
}

.dialog-logo {
  width: 17px;
  height: 17px;
}

.tabs {
  display: grid;
  padding: 0 3px 0 2px;
}

.tabs-back {
  grid-template-columns: 222fr 129fr 94fr 133fr;
  padding-top: 2px;
}

.tabs-front {
  grid-template-columns: 169fr 87fr 93fr 94fr 136fr;
}

.tabs button {
  height: 21px;
  background-color: #ebebeb;
  border: 1px solid #555;
  border-left-color: #fff;
  border-bottom-color: #999;
  border-radius: 3px 3px 0 0;
}

.tabs .active {
  background-color: #c3c3c3;
  border-bottom: 0;
}

.dialog-body {
  padding: 37px 21px 15px 27px;
}

.check {
  display: flex;
  align-items: center;
  gap: 5px;
  height: 18px;
}

.check input {
  appearance: none;
  display: grid;
  place-items: center;
  width: 12px;
  height: 12px;
  background-color: #e4e4e4;
  border-top: 2px solid #444;
  border-left: 2px solid #444;
}

.check input:checked::before {
  content: "";
  width: 4px;
  height: 7px;
  margin-bottom: 4px;
  border: solid #111;
  border-width: 0 2px 2px 0;
  transform: rotate(42deg);
}

fieldset {
  min-width: 0;
  margin: 0;
  padding: 0;
  border: 1px solid #666;
}

legend {
  padding: 0 3px;
}

.resolution {
  height: 112px;
  margin-top: 9px;
  padding: 10px 28px 0 21px;
}

.resolution legend {
  margin-left: -16px;
}

.res-head {
  padding-right: 46px;
  text-align: right;
}

.res-row {
  display: flex;
  align-items: center;
  height: 21px;
}

.res-row label {
  flex: 1;
}

.res-row input {
  width: 42px;
  height: 16px;
}

.res-row .spin {
  margin: 0 5px 0 4px;
}

.spin {
  display: grid;
  width: 12px;
  height: 16px;
}

.spin button {
  border: 1px solid #ddd;
  border-right-color: #555;
  border-bottom-color: #777;
}

.spin button::before {
  content: "";
  border: 2px solid transparent;
  border-bottom: 3px solid #111;
  border-top: 0;
}

.spin button:last-child::before {
  border-top: 3px solid #111;
  border-bottom: 0;
}

::selection {
  background-color: #3392dd;
  color: #fff;
}

.columns {
  display: grid;
  grid-template-columns: 277fr 250fr;
  gap: 10px;
  margin-top: 12px;
}

.degradation {
  padding: 11px 0 5px 15px;
}

.degradation legend {
  margin-left: -10px;
}

.num-row {
  display: flex;
  align-items: center;
  height: 21px;
  margin-left: -2px;
  white-space: nowrap;
}

.num-row input[type="text"] {
  width: 24px;
  height: 18px;
  margin-left: 6px;
  padding-right: 0;
}

.num-row .fps[type="text"] {
  width: 28px;
  margin-left: 10px;
}

.num-row .spin {
  margin-right: 3px;
}

.side {
  display: grid;
  gap: 3px;
}

.quality {
  padding: 8px 25px 8px 18px;
}

.quality legend {
  margin-left: -13px;
}

.quality-value {
  display: block;
  height: 20px;
  border: 1px solid #777;
  border-right: 2px solid #fff;
  border-bottom: 2px solid #fff;
}

.slider {
  appearance: none;
  display: block;
  width: 195px;
  height: 18px;
  margin: 11px 0 0 4px;
}

.slider::-webkit-slider-runnable-track {
  height: 4px;
  background-color: #fff;
}

.slider::-webkit-slider-thumb {
  appearance: none;
  width: 10px;
  height: 17px;
  margin-top: -7px;
  background-color: #f5f5f5;
  clip-path: polygon(50% 0, 100% 30%, 100% 100%, 0 100%, 0 30%);
}

.cache {
  padding: 6px 8px 8px;
}

.cache legend {
  margin-left: -3px;
}

.cache .btn {
  width: 52px;
  height: 22px;
  margin-left: auto;
}

.cache input[type="text"] {
  display: block;
  width: 100%;
  height: 20px;
  margin-top: 9px;
  padding: 0 0 0 4px;
  background-color: #c3c3c3;
  border: 1px solid #555;
  border-right-color: #eee;
  border-bottom: 2px solid #eee;
}

.actions {
  display: flex;
  justify-content: flex-end;
  gap: 8px;
  margin-top: 79px;
}

.actions .btn {
  width: 60px;
  height: 25px;
}

.actions .apply {
  width: 120px;
}

/* Command panel */
.command-panel {
  display: flex;
  flex-direction: column;
  width: 185px;
  padding: 3px 6px 0 3px;
}

.panel-tabs {
  display: grid;
  grid-template-columns: repeat(6, 1fr);
}

.panel-tabs button {
  height: 24px;
  border: 1px solid #555;
  border-left-color: #fff;
  border-radius: 3px 3px 0 0;
  background-color: #ddd;
}

.panel-tabs .active {
  background-color: #c3c3c3;
  border-bottom: 0;
}

.panel-tabs .icon {
  width: 21px;
  height: 21px;
}

.categories {
  display: grid;
  grid-template-columns: repeat(7, 1fr);
  margin: 8px 1px 6px 7px;
}

.categories button {
  height: 24px;
}

.primitives {
  height: 21px;
  margin: 0 4px 7px 8px;
}

.rollouts {
  flex: 1;
  margin-bottom: 10px;
  padding: 4px 4px 0 5px;
  border-top: 1px solid #777;
  border-right: 1px solid #eee;
  border-bottom: 1px solid #eee;
}

.rollout {
  padding: 0 7px 3px;
  margin-bottom: 8px;
  border: 1px solid #777;
  border-top: 0;
}

.rollout h3 {
  margin: 0 -5px;
  font-size: 11px;
  font-weight: normal;
}

.rollout h3 button {
  width: 100%;
  height: 16px;
  padding-right: 6px;
  border: 1px solid #333;
}

.rollout h3 span {
  margin-right: auto;
  padding-left: 4px;
}

.rollout h3 button::after {
  content: "";
  margin-right: auto;
}

.rollout .check {
  gap: 10px;
  margin-left: 26px;
}

.disabled {
  color: #777;
}

.check input:disabled {
  background-color: #c3c3c3;
  border-color: #777;
}

.object-grid {
  display: grid;
  grid-template-columns: 1fr 1fr;
  gap: 3px 9px;
  padding: 3px 0 0 2px;
}

.object-grid .btn {
  height: 18px;
}

.name-row {
  display: flex;
  gap: 4px;
  padding: 7px 0 4px;
}

.name-row input {
  flex: 1;
  height: 20px;
}

.swatch {
  width: 17px;
  height: 20px;
  border: 1px solid #ddd;
  background-color: #b30f73;
}

/* Time slider and status bar */
.time-slider {
  display: flex;
  gap: 1px;
  height: 18px;
  margin: 0 0 2px 2px;
}

.time-slider button {
  width: 14px;
  border: 1px solid #ddd;
  border-right-color: #444;
  border-bottom-color: #444;
}

.time-slider .frame {
  width: 125px;
  border-right: 2px solid #222;
  border-bottom: 2px solid #222;
}

.status {
  display: flex;
  gap: 4px;
  height: 48px;
  padding: 0 5px 0 2px;
}

.listener {
  display: grid;
  grid-template-rows: 23px 23px;
  gap: 1px;
  width: 97px;
  margin-right: 5px;
}

.listener input {
  width: 100%;
  padding: 0 4px;
  background-color: #fff;
  font-family: "Liberation Mono", monospace;
  font-size: 12px;
}

.listener .macro[type="text"] {
  background-color: #dfc5c8;
}

.status-rows {
  flex: 1;
  display: grid;
  grid-template-rows: 23px 23px;
  gap: 2px;
  min-width: 0;
}

.status-row {
  display: flex;
  align-items: center;
  gap: 3px;
}

.well {
  height: 22px;
  padding: 4px;
  border: 1px solid #555;
  border-right-color: #eee;
  border-bottom-color: #eee;
  white-space: nowrap;
}

.grow {
  flex: 1;
}

.mini {
  margin: 0 3px;
}

.coord {
  display: flex;
  align-items: center;
  justify-content: flex-end;
  gap: 1px;
  width: 79px;
  padding-right: 8px;
}

.coord input {
  width: 58px;
  height: 20px;
  color: #777;
}

.side-well {
  width: 100px;
}

.cube {
  width: 22px;
  height: 22px;
}

.set-keys {
  width: 44px;
  height: 44px;
}

.set-keys .icon {
  width: 26px;
  height: 14px;
}

.key-modes {
  display: grid;
  grid-template-rows: 22px 22px;
  width: 48px;
}

.key-options {
  display: flex;
  flex-direction: column;
  gap: 2px;
  width: 116px;
}

.key-options select {
  height: 21px;
}

.key-filter-row {
  display: flex;
  align-items: center;
}

.key-filter-row .btn {
  flex: 1;
  height: 21px;
}

.control-row {
  display: flex;
  align-items: center;
  height: 23px;
}

.control-row .play {
  width: 25px;
}

.control-row .nav {
  width: 23px;
}

.play svg {
  width: 18px;
  height: 12px;
}

.control-row input {
  width: 62px;
  height: 20px;
}

.control-row .spin {
  margin: 0 1px 0 2px;
}

.watermark {
  position: absolute;
  right: 24px;
  bottom: 12px;
  color: rgba(50, 50, 50, 0.75);
  font-family: Inter, sans-serif;
  font-size: 44px;
  font-weight: 400;
  line-height: 60px;
  pointer-events: none;
}

.watermark span {
  font-weight: 600;
}
```
